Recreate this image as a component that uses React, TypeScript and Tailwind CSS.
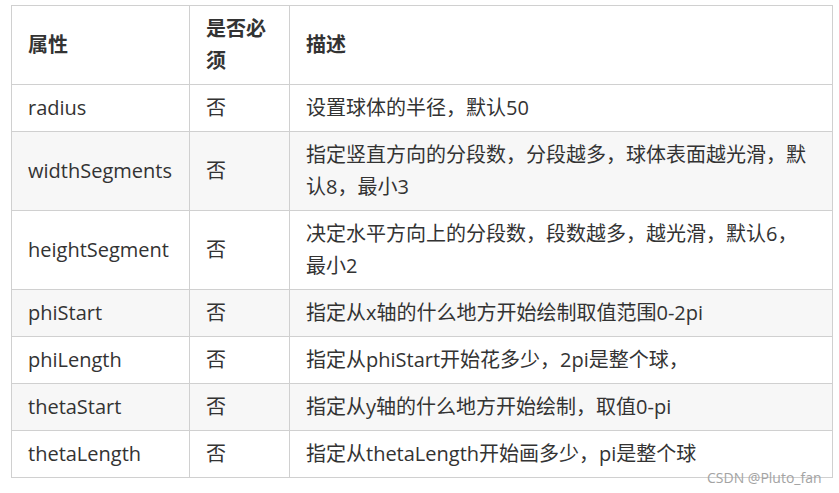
const rows = [
  { name: "radius", req: "否", desc: "设置球体的半径，默认50" },
  {
    name: "widthSegments",
    req: "否",
    desc: "指定竖直方向的分段数，分段越多，球体表面越光滑，默认8，最小3",
  },
  {
    name: "heightSegment",
    req: "否",
    desc: "决定水平方向上的分段数，段数越多，越光滑，默认6，最小2",
  },
  { name: "phiStart", req: "否", desc: "指定从x轴的什么地方开始绘制取值范围0-2pi" },
  { name: "phiLength", req: "否", desc: "指定从phiStart开始花多少，2pi是整个球，" },
  { name: "thetaStart", req: "否", desc: "指定从y轴的什么地方开始绘制，取值0-pi" },
  { name: "thetaLength", req: "否", desc: "指定从thetaLength开始画多少，pi是整个球" },
];

const App = () => {
  return (
    <div className="relative h-[493px] w-[839px] overflow-hidden bg-white font-['Open_Sans','Noto_Sans_CJK_SC',sans-serif] text-[20px] leading-[32px] text-[#333]">
      <div className="pl-[11px] pt-[5px]">
        <table className="w-[822px] table-fixed border-collapse border border-[#d0d0d0]">
          <colgroup>
            <col className="w-[178px]" />
            <col className="w-[100px]" />
            <col />
          </colgroup>
          <thead>
            <tr className="bg-white">
              <th className="border border-[#d0d0d0] py-[7px] pl-[16px] pr-[18px] text-left font-bold">
                属性
              </th>
              <th className="border border-[#d0d0d0] py-[7px] pl-[16px] pr-[18px] text-left font-bold">
                是否必须
              </th>
              <th className="border border-[#d0d0d0] py-[7px] pl-[16px] pr-[18px] text-left font-bold">
                描述
              </th>
            </tr>
          </thead>
          <tbody>
            {rows.map((row, i) => (
              <tr key={row.name} className={i % 2 === 1 ? "bg-[#f7f7f7]" : "bg-white"}>
                <td className="border border-[#d0d0d0] py-[7px] pl-[16px] pr-[18px]">
                  {row.name}
                </td>
                <td className="border border-[#d0d0d0] py-[7px] pl-[16px] pr-[18px]">
                  {row.req}
                </td>
                <td className="border border-[#d0d0d0] py-[7px] pl-[16px] pr-[18px]">
                  {row.desc}
                </td>
              </tr>
            ))}
          </tbody>
        </table>
      </div>
      <div className="absolute left-[707px] top-[468px] text-[14px] leading-[20px] text-[#a3a3a3]">
        CSDN @Pluto_fan
      </div>
    </div>
  );
};

export default App;
